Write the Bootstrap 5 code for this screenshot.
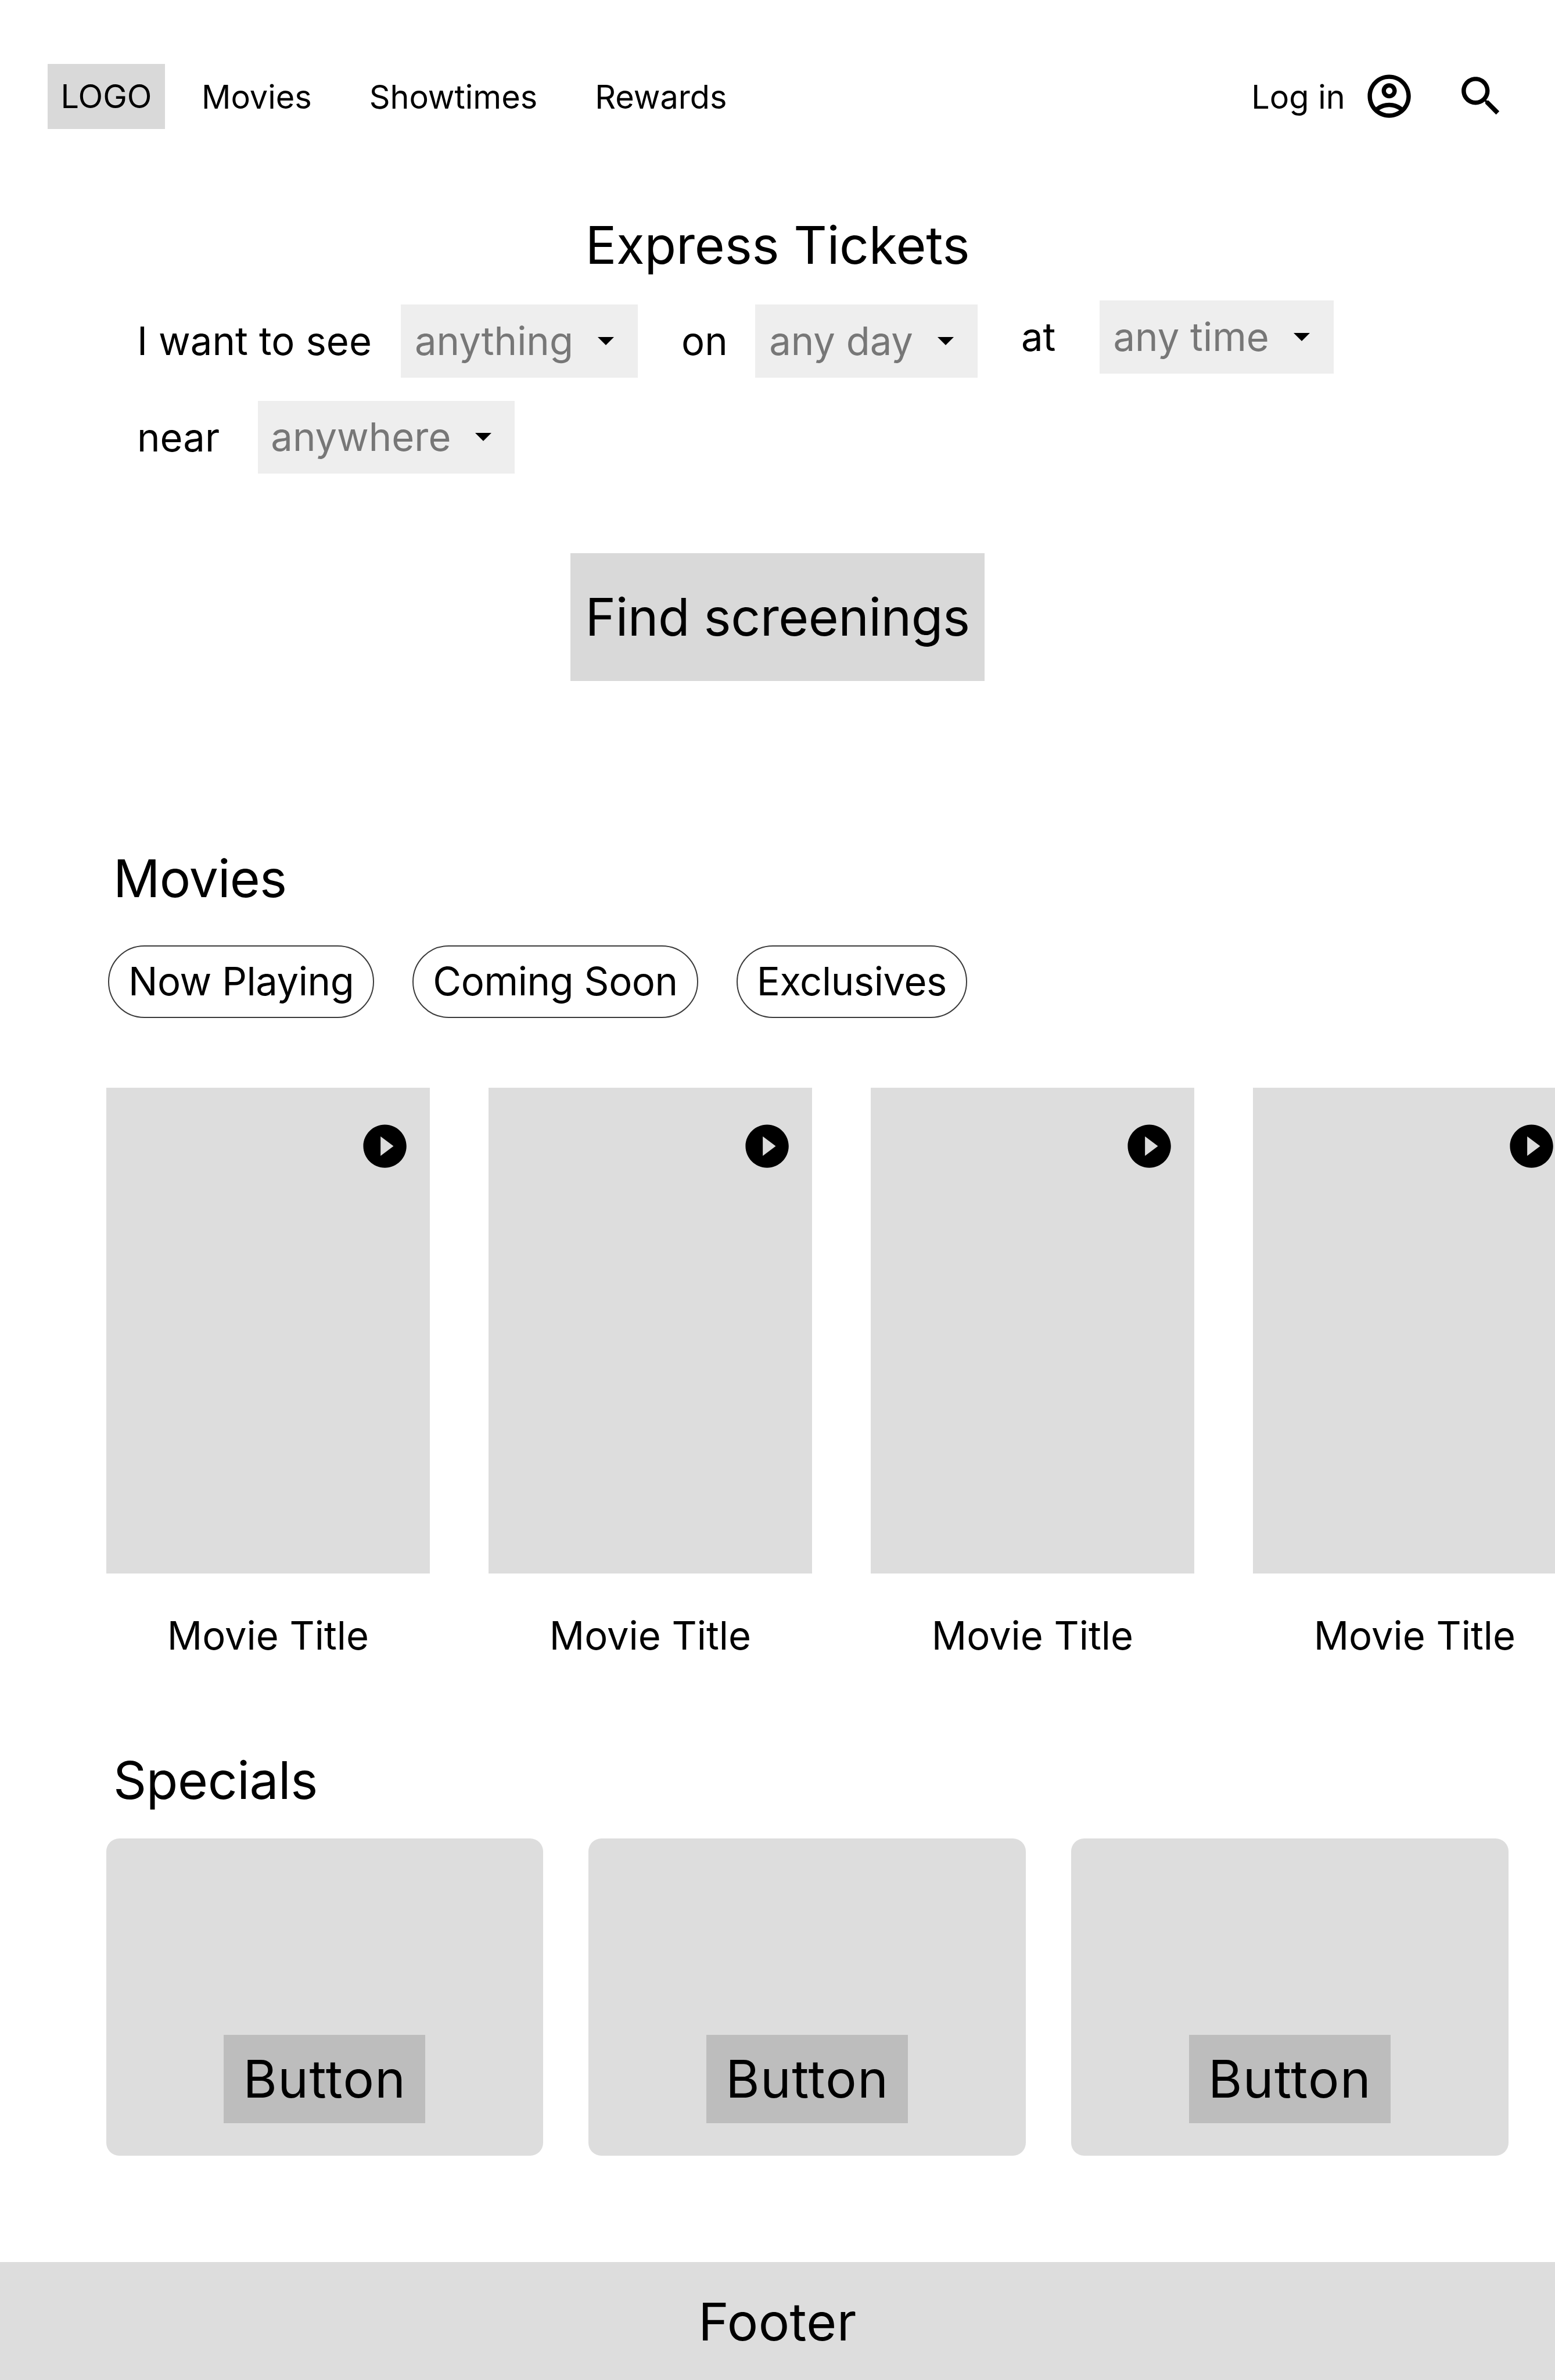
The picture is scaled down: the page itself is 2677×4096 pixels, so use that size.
<!DOCTYPE html>
<html lang="en">
<head>
<meta charset="utf-8">
<title>Movies</title>
<link rel="stylesheet" href="https://cdn.jsdelivr.net/npm/bootstrap@5.3.0/dist/css/bootstrap.min.css">
<style>
html,body{margin:0;width:2677px;height:4096px;overflow:hidden;background:#fff}
body{font-family:"Inter","Liberation Sans",sans-serif;color:#000;font-weight:400}
.top-nav{padding:110px 83px 0 82px;align-items:center}
.top-nav .navbar-brand{background:#d9d9d9;color:#000;font-size:55.8px;line-height:112px;height:112px;width:202px;padding:0;margin:0 55px 0 0;text-align:center}
.top-nav .nav-link{color:#000;font-size:55.8px;line-height:67px;padding:0;margin-right:83px}
.top-nav .login{margin-right:31px;margin-left:auto;color:#000;font-size:55.8px;line-height:67px;text-decoration:none}
.icon-box{width:89.2px;height:89.2px;display:block;flex:none;fill:#000}
.icon-gap{margin-left:69px}
.sec-title{font-size:89.2px;line-height:107px;font-weight:400;margin:0}
.express{margin-top:147px;text-align:center;letter-spacing:-.2px}
.filters{padding-left:236px;margin-top:48px;display:flex;flex-direction:column;gap:40px}
.filter-row{display:flex;align-items:flex-start}
.filter-text{font-size:66.9px;line-height:125.5px;white-space:nowrap;letter-spacing:.1px}
.pick{background:#eee;color:#777;font-size:66.9px;line-height:80px;height:125.5px;padding:0 41px 0 24px;border:0;border-radius:0;display:flex;align-items:center;margin-left:50px;margin-right:75px}
.pick:hover,.pick:active,.pick:focus{background:#eee!important;color:#777!important}
.pick.dropdown-toggle::after{border-top:14px solid #000;border-left:14px solid transparent;border-right:14px solid transparent;border-bottom:0;margin-left:42px;vertical-align:middle}
.raised{margin-top:-7px}
.pick-on{margin-left:47.5px}
.pick-far{margin-left:75px}
.pick-near{margin-left:66px;padding:0 40px 0 22px}
.find-wrap{margin-top:136.5px}
.find-btn{background:#d9d9d9;color:#000;font-size:89.2px;letter-spacing:-.5px;line-height:107px;width:713px;height:220px;padding:2px 0 0;border:0;border-radius:0}
.movies-title{margin-top:287px;padding-left:195px;letter-spacing:-.8px}
.pill-row{margin-top:61px;padding-left:186px;gap:66px}
.tab-pill{font-size:66.9px;letter-spacing:-.4px;line-height:80px;height:125px;padding:0 33px;color:#000;background:#fff;border:2px solid #3a3a3a}
.poster-row{margin-top:120px;padding-left:182.6px;gap:100.4px;overflow:hidden}
.poster-item{flex:none;width:557.6px}
.poster{height:836.4px;background:#ddd}
.play{position:absolute;top:56.5px;right:33px}
.poster-name{margin:67px 0 0;font-size:66.9px;line-height:80.3px;text-align:center}
.specials-title{margin-top:155.5px;padding-left:195px;letter-spacing:-.4px}
.special-row{margin-top:46.5px;padding-left:182.6px;gap:78px}
.special-card{width:752.8px;height:546px;background:#ddd;border:0;border-radius:22.3px;padding-bottom:56.5px}
.special-btn{width:347px;height:152px;background:#bdbdbd;color:#000;font-size:89.2px;letter-spacing:1.4px;line-height:107px;padding:2px 0 0;border:0;border-radius:0}
.page-foot{margin-top:183px;height:203px;padding-top:3px;background:#ddd;font-size:89.2px;letter-spacing:.4px;line-height:107px}
</style>
</head>
<body>
<nav class="navbar navbar-expand top-nav">
  <a class="navbar-brand" href="#">LOGO</a>
  <div class="navbar-nav flex-row">
    <a class="nav-link" href="#">Movies</a>
    <a class="nav-link" href="#">Showtimes</a>
    <a class="nav-link" href="#">Rewards</a>
  </div>
  <a class="login" href="#">Log in</a>
  <svg class="icon-box" viewBox="0 0 24 24"><path d="M12 2C6.48 2 2 6.48 2 12s4.48 10 10 10 10-4.48 10-10S17.52 2 12 2zM7.35 18.5C8.66 17.56 10.26 17 12 17s3.34.56 4.65 1.5c-1.31.94-2.91 1.5-4.65 1.5s-3.34-.56-4.65-1.5zm10.79-1.38C16.45 15.8 14.32 15 12 15s-4.45.8-6.14 2.12C4.7 15.73 4 13.95 4 12c0-4.42 3.58-8 8-8s8 3.58 8 8c0 1.95-.7 3.73-1.86 5.12z"/><path d="M12 6c-1.93 0-3.5 1.57-3.5 3.5S10.07 13 12 13s3.5-1.57 3.5-3.5S13.93 6 12 6zm0 5c-.83 0-1.5-.67-1.5-1.5S11.17 8 12 8s1.5.67 1.5 1.5S12.83 11 12 11z"/></svg>
  <svg class="icon-box icon-gap" viewBox="0 0 24 24"><path d="M15.5 14h-.79l-.28-.27C15.41 12.59 16 11.11 16 9.5 16 5.91 13.09 3 9.5 3S3 5.91 3 9.5 5.91 16 9.5 16c1.61 0 3.09-.59 4.23-1.57l.27.28v.79l5 4.99L20.49 19l-4.99-5zm-6 0C7.01 14 5 11.99 5 9.5S7.01 5 9.5 5 14 7.01 14 9.5 11.99 14 9.5 14z"/></svg>
</nav>

<h1 class="sec-title express">Express Tickets</h1>
<div class="filters">
  <div class="filter-row">
    <span class="filter-text">I want to see</span>
    <button class="btn pick dropdown-toggle" type="button">anything</button>
    <span class="filter-text">on</span>
    <button class="btn pick pick-on dropdown-toggle" type="button">any day</button>
    <span class="filter-text raised">at</span>
    <button class="btn pick pick-far dropdown-toggle raised" type="button">any time</button>
  </div>
  <div class="filter-row">
    <span class="filter-text">near</span>
    <button class="btn pick pick-near dropdown-toggle" type="button">anywhere</button>
  </div>
</div>
<div class="find-wrap d-flex justify-content-center">
  <button class="btn find-btn" type="button">Find screenings</button>
</div>

<h2 class="sec-title movies-title">Movies</h2>
<div class="pill-row d-flex">
  <button class="btn rounded-pill tab-pill" type="button">Now Playing</button>
  <button class="btn rounded-pill tab-pill" type="button">Coming Soon</button>
  <button class="btn rounded-pill tab-pill" type="button">Exclusives</button>
</div>
<div class="poster-row d-flex">
  <div class="poster-item"><div class="poster position-relative"><svg class="icon-box play" viewBox="0 0 24 24"><path d="M12 2C6.48 2 2 6.48 2 12s4.48 10 10 10 10-4.48 10-10S17.52 2 12 2zm-2 14.5v-9l6 4.5-6 4.5z"/></svg></div><p class="poster-name">Movie Title</p></div>
  <div class="poster-item"><div class="poster position-relative"><svg class="icon-box play" viewBox="0 0 24 24"><path d="M12 2C6.48 2 2 6.48 2 12s4.48 10 10 10 10-4.48 10-10S17.52 2 12 2zm-2 14.5v-9l6 4.5-6 4.5z"/></svg></div><p class="poster-name">Movie Title</p></div>
  <div class="poster-item"><div class="poster position-relative"><svg class="icon-box play" viewBox="0 0 24 24"><path d="M12 2C6.48 2 2 6.48 2 12s4.48 10 10 10 10-4.48 10-10S17.52 2 12 2zm-2 14.5v-9l6 4.5-6 4.5z"/></svg></div><p class="poster-name">Movie Title</p></div>
  <div class="poster-item"><div class="poster position-relative"><svg class="icon-box play" viewBox="0 0 24 24"><path d="M12 2C6.48 2 2 6.48 2 12s4.48 10 10 10 10-4.48 10-10S17.52 2 12 2zm-2 14.5v-9l6 4.5-6 4.5z"/></svg></div><p class="poster-name">Movie Title</p></div>
</div>

<h2 class="sec-title specials-title">Specials</h2>
<div class="special-row d-flex">
  <div class="card special-card align-items-center justify-content-end"><button class="btn special-btn" type="button">Button</button></div>
  <div class="card special-card align-items-center justify-content-end"><button class="btn special-btn" type="button">Button</button></div>
  <div class="card special-card align-items-center justify-content-end"><button class="btn special-btn" type="button">Button</button></div>
</div>

<footer class="page-foot d-flex align-items-center justify-content-center">Footer</footer>
<script src="https://cdn.jsdelivr.net/npm/bootstrap@5.3.0/dist/js/bootstrap.bundle.min.js"></script>
</body>
</html>
